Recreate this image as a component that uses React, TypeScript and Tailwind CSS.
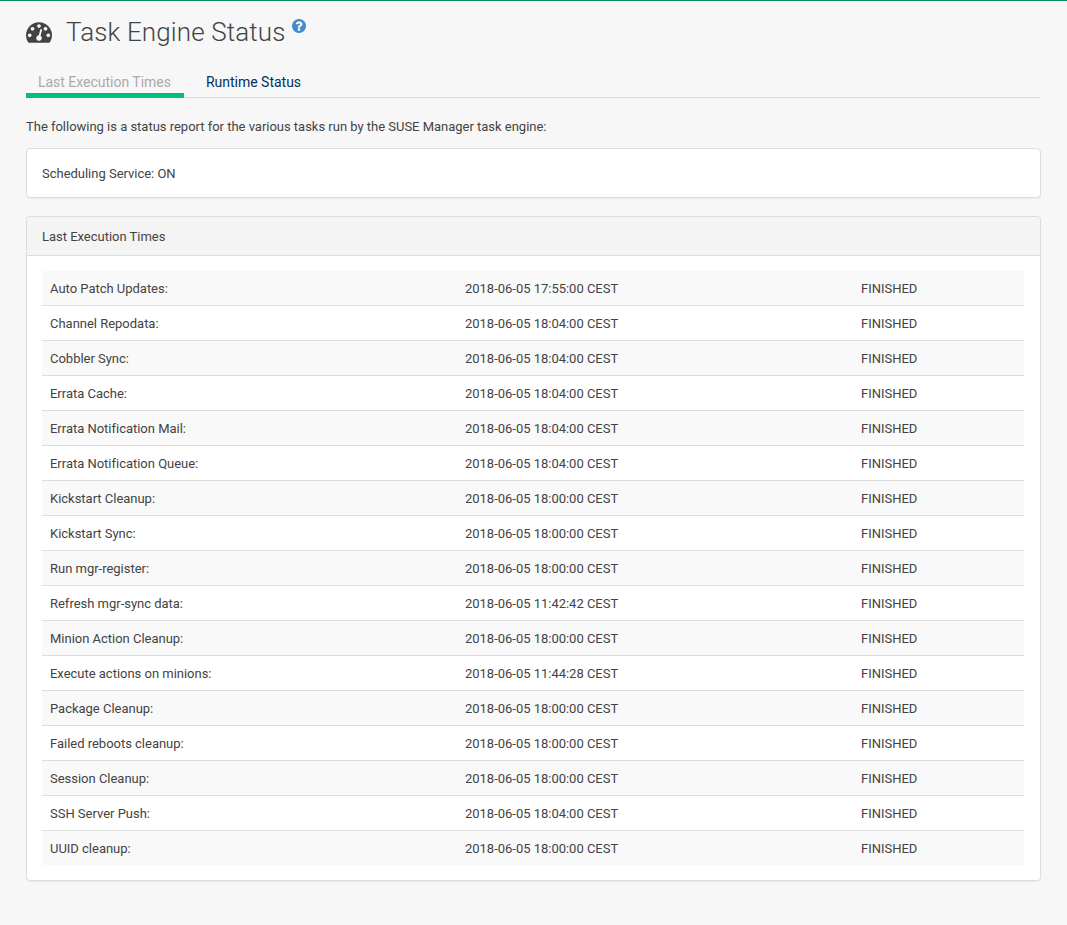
import React from 'react';

const tasks: [string, string][] = [
  ['Auto Patch Updates:', '2018-06-05 17:55:00 CEST'],
  ['Channel Repodata:', '2018-06-05 18:04:00 CEST'],
  ['Cobbler Sync:', '2018-06-05 18:04:00 CEST'],
  ['Errata Cache:', '2018-06-05 18:04:00 CEST'],
  ['Errata Notification Mail:', '2018-06-05 18:04:00 CEST'],
  ['Errata Notification Queue:', '2018-06-05 18:04:00 CEST'],
  ['Kickstart Cleanup:', '2018-06-05 18:00:00 CEST'],
  ['Kickstart Sync:', '2018-06-05 18:00:00 CEST'],
  ['Run mgr-register:', '2018-06-05 18:00:00 CEST'],
  ['Refresh mgr-sync data:', '2018-06-05 11:42:42 CEST'],
  ['Minion Action Cleanup:', '2018-06-05 18:00:00 CEST'],
  ['Execute actions on minions:', '2018-06-05 11:44:28 CEST'],
  ['Package Cleanup:', '2018-06-05 18:00:00 CEST'],
  ['Failed reboots cleanup:', '2018-06-05 18:00:00 CEST'],
  ['Session Cleanup:', '2018-06-05 18:00:00 CEST'],
  ['SSH Server Push:', '2018-06-05 18:04:00 CEST'],
  ['UUID cleanup:', '2018-06-05 18:00:00 CEST'],
];

function GaugeIcon() {
  return (
    <svg viewBox="0 0 1792 1408" className="mt-[7px] h-[21px] w-[26px] shrink-0 fill-[#434343]">
      <path d="M384 896q0-53-37.500-90.500t-90.500-37.500-90.500 37.500-37.500 90.500 37.500 90.500 90.500 37.500 90.500-37.500 37.500-90.500zM576 448q0-53-37.500-90.500t-90.500-37.500-90.500 37.500-37.500 90.500 37.500 90.500 90.500 37.500 90.500-37.500 37.500-90.500zM1004 929l101-382q6-26-7.500-48.500t-38.500-29.500-48 6.500-30 39.500l-101 382q-60 5-107 43.500t-63 98.500q-20 77 20 146t117 89 146-20 89-117q16-60-6-117t-72-91zM1664 896q0-53-37.500-90.500t-90.500-37.500-90.500 37.500-37.500 90.500 37.500 90.500 90.500 37.500 90.500-37.500 37.500-90.500zM1024 256q0-53-37.500-90.500t-90.500-37.500-90.500 37.500-37.500 90.500 37.500 90.500 90.500 37.500 90.500-37.500 37.500-90.500zM1472 448q0-53-37.500-90.500t-90.500-37.500-90.500 37.500-37.500 90.500 37.500 90.500 90.500 37.500 90.500-37.500 37.500-90.500zM1792 896q0 261-141 483-19 29-54 29h-1402q-35 0-54-29-141-221-141-483 0-182 71-348t191-286 286-191 348-71 348 71 286 191 191 286 71 348z" />
    </svg>
  );
}

function HelpIcon() {
  return (
    <svg viewBox="128 128 1536 1536" className="mt-[4px] ml-[7px] h-[14px] w-[14px] shrink-0 fill-[#428bca]">
      <path d="M1024 1376v-192q0-14-9-23t-23-9h-192q-14 0-23 9t-9 23v192q0 14 9 23t23 9h192q14 0 23-9t9-23zm256-672q0-88-55.500-163t-138.500-116-170-41q-243 0-371 213-15 24 8 42l132 100q7 6 19 6 16 0 25-12 53-68 86-92 34-24 86-24 48 0 85.500 26t37.500 59q0 38-20 61t-68 45q-63 28-115.500 86.500t-52.500 125.500v36q0 14 9 23t23 9h192q14 0 23-9t9-23q0-19 21.500-49.500t54.500-49.500q32-18 49-28.500t46-35 44.500-48 28-60.500 12.500-81zm384 192q0 209-103 385.500t-279.500 279.500-385.500 103-385.500-103-279.500-279.500-103-385.500 103-385.500 279.500-279.500 385.500-103 385.500 103 279.500 279.500 103 385.500z" />
    </svg>
  );
}

export default function App() {
  return (
    <div className="min-h-[925px] border-t border-[#0d8a62] bg-[#f7f7f7] px-[26px] pt-[14px] font-['Roboto',sans-serif] text-[13px] leading-[18px] tracking-[-0.016px] text-[#434343]">
      <header className="flex h-[35px]">
        <GaugeIcon />
        <h1 className="ml-[14px] text-[26px] leading-[35px] font-light tracking-[0.12px]">Task Engine Status</h1>
        <HelpIcon />
      </header>
      <nav className="mt-[17px] flex h-[31px] border-b border-[#dddddd] text-[14px] leading-[30px]">
        <span className="h-[31px] w-[158px] border-b-[5px] border-[#00c081] pl-[12px] text-[#aaaaaa]">Last Execution Times</span>
        <a className="pl-[22px] text-[#00325a]">Runtime Status</a>
      </nav>
      <p className="mt-[20px]">The following is a status report for the various tasks run by the SUSE Manager task engine:</p>
      <section className="mt-[12px] h-[50px] rounded-[4px] border border-[#dddddd] bg-white px-[15px] py-[16px] shadow-[0_1px_1px_rgba(0,0,0,0.05)]">
        Scheduling Service: ON
      </section>
      <section className="mt-[18px] h-[665px] rounded-[4px] border border-[#dddddd] bg-white shadow-[0_1px_1px_rgba(0,0,0,0.05)]">
        <h2 className="h-[39px] rounded-t-[3px] border-b border-[#dddddd] bg-[#f4f4f4] px-[15px] leading-[39px]">Last Execution Times</h2>
        <div className="pt-[15px] pr-[16px] pl-[15px]">
          {tasks.map(([name, time]) => (
            <div
              key={name}
              className="grid h-[35px] grid-cols-[415px_396px_1fr] border-b border-[#dddddd] px-[8px] leading-[35px] last:h-[34px] last:border-b-0 odd:bg-[#f9f9f9]"
            >
              <span>{name}</span>
              <span>{time}</span>
              <span>FINISHED</span>
            </div>
          ))}
        </div>
      </section>
    </div>
  );
}
